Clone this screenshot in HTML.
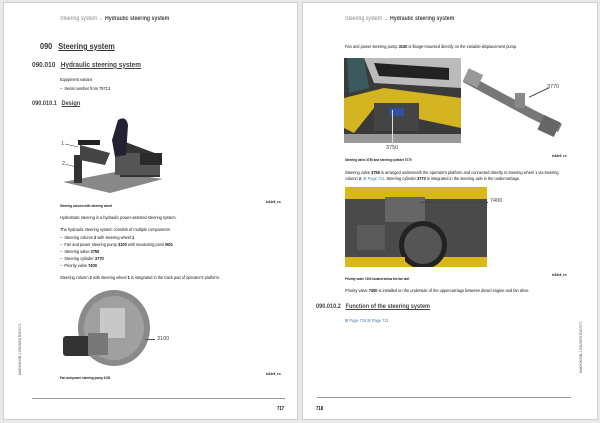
<!DOCTYPE html>
<html><head><meta charset="utf-8"><style>
*{margin:0;padding:0;box-sizing:border-box}
body{width:600px;height:423px;background:#e9e9e9;position:relative;overflow:hidden;font-family:"Liberation Sans Narrow","Liberation Sans",sans-serif;color:#111}
.pg{position:absolute;background:#fff;top:2px;height:418px;border:1px solid #cfcfcf}
.t{position:absolute;white-space:nowrap;font-size:4.6px;line-height:5px;transform:scaleX(0.86);transform-origin:0 0}
.hd{font-size:6px;color:#888}
.hd b{color:#444;font-weight:bold}
.h1{font-size:8.5px;color:#333;font-weight:bold}
.h2{font-size:7.5px;color:#444;font-weight:bold}
.h3{font-size:6.5px;color:#444;font-weight:bold}
u{text-decoration:underline}
.line{position:absolute;height:1px;background:#999}
.lbl{position:absolute;font-size:5.5px;color:#444}
.vt{position:absolute;font-size:3.5px;color:#555;writing-mode:vertical-rl;transform:rotate(180deg)}
.sm{font-size:3.5px !important;font-weight:bold}
</style></head><body>
<div class="pg" style="left:3px;width:295px"></div>
<div class="pg" style="left:302px;width:296px"></div>

<!-- left page -->
<div class="t hd" style="left:60px;top:17px">Steering system → <b>Hydraulic steering system</b></div>
<div class="t h1" style="left:40px;top:44px">090&nbsp;&nbsp;&nbsp;<u>Steering system</u></div>
<div class="t h2" style="left:32px;top:62px">090.010&nbsp;&nbsp;&nbsp;<u>Hydraulic steering system</u></div>
<div class="t" style="left:60px;top:77px">Equipment variant</div>
<div class="t" style="left:60px;top:86px">–&nbsp; Serial number from 79713</div>
<div class="t h3" style="left:32px;top:101px">090.010.1&nbsp;&nbsp;&nbsp;<u>Design</u></div>
<svg style="position:absolute;left:60px;top:115px" width="110" height="82">
<polygon points="3,67 55,57 103,64 50,78" fill="#888"/>
<polygon points="60,25 100,40 100,62 60,62" fill="#333"/>
<rect x="55" y="38" width="45" height="22" fill="#555"/>
<path d="M58,5 Q66,0 68,10 L66,40 L55,42 L52,25Z" fill="#223"/>
<rect x="18" y="25" width="22" height="5" fill="#222"/>
<rect x="14" y="40" width="8" height="28" fill="#333"/>
<path d="M20,30 L50,38 L45,50 L20,45Z" fill="#444"/>
<rect x="80" y="38" width="22" height="12" fill="#2a2a2a"/>
<line x1="5" y1="29" x2="18" y2="32" stroke="#333" stroke-width=".5"/>
<line x1="5" y1="49" x2="16" y2="52" stroke="#333" stroke-width=".5"/>
</svg>
<div class="lbl" style="left:61px;top:141px">1</div>
<div class="lbl" style="left:62px;top:161px">2</div>
<div class="t sm" style="left:60px;top:204px">Steering column with steering wheel</div>
<div class="t sm" style="left:266px;top:200px">tx34e6_en</div>
<div class="t" style="left:60px;top:215px">Hydrostatic steering is a hydraulic power-assisted steering system.</div>
<div class="t" style="left:60px;top:227px">The hydraulic steering system consists of multiple components:</div>
<div class="t" style="left:60px;top:235px">–&nbsp; Steering column <b>2</b> with steering wheel <b>1</b></div>
<div class="t" style="left:60px;top:242px">–&nbsp; Fan and power steering pump <b>3100</b> with measuring point <b>M01</b></div>
<div class="t" style="left:60px;top:249px">–&nbsp; Steering valve <b>3750</b></div>
<div class="t" style="left:60px;top:256px">–&nbsp; Steering cylinder <b>3770</b></div>
<div class="t" style="left:60px;top:263px">–&nbsp; Priority valve <b>7400</b></div>
<div class="t" style="left:60px;top:275px">Steering column <b>2</b> with steering wheel <b>1</b> is integrated in the track pad of operator's platform.</div>
<svg style="position:absolute;left:60px;top:288px" width="100" height="82">
<ellipse cx="54" cy="40" rx="36" ry="38" fill="#8a8a8a"/>
<ellipse cx="54" cy="40" rx="30" ry="32" fill="#a0a0a0"/>
<rect x="40" y="20" width="25" height="30" fill="#c8c8c8"/>
<rect x="3" y="48" width="28" height="20" rx="3" fill="#333"/>
<rect x="28" y="45" width="20" height="22" fill="#777"/>
</svg>
<div class="line" style="left:145px;top:339px;width:10px;background:#555"></div>
<div class="lbl" style="left:157px;top:336px">3100</div>
<div class="t sm" style="left:60px;top:376px">Fan and power steering pump 3100</div>
<div class="t sm" style="left:266px;top:372px">tx34e6_en</div>
<div class="vt" style="left:18px;top:305px;height:70px">MAEKW/GB-1 EN/WESTDOS/71</div>
<div class="line" style="left:32px;top:398px;width:253px"></div>
<div class="t" style="left:277px;top:407px;font-size:5px;font-weight:bold">717</div>

<!-- right page -->
<div class="t hd" style="left:345px;top:17px">Steering system → <b>Hydraulic steering system</b></div>
<div class="t" style="left:345px;top:44px">Fan and power steering pump <b>3100</b> is flange-mounted directly on the variable-displacement pump.</div>
<svg style="position:absolute;left:344px;top:58px" width="117" height="85">
<rect width="117" height="85" fill="#3a3a3a"/>
<polygon points="20,0 117,0 117,30 30,25" fill="#bbb"/>
<polygon points="30,5 105,10 105,22 35,18" fill="#222"/>
<polygon points="3,0 20,0 25,30 5,35" fill="#3a5a60"/>
<path d="M0,40 L40,30 L117,40 L117,70 L70,60 L30,50 L10,75 L0,70Z" fill="#d4b420"/>
<rect x="30" y="45" width="45" height="28" fill="#444"/>
<rect x="45" y="50" width="15" height="8" fill="#3050a0"/>
<rect x="0" y="76" width="117" height="9" fill="#999"/>
</svg>
<svg style="position:absolute;left:460px;top:68px" width="105" height="72">
<path d="M5,10 L70,45 L100,60" stroke="#777" stroke-width="9" fill="none"/>
<rect x="5" y="3" width="16" height="14" fill="#999" transform="rotate(25 13 10)"/>
<rect x="80" y="50" width="18" height="16" fill="#666" transform="rotate(25 89 58)"/>
<rect x="55" y="25" width="10" height="15" fill="#888"/>
</svg>
<div class="line" style="left:528px;top:92px;width:22px;transform:rotate(-25deg);background:#444"></div>
<div class="lbl" style="left:547px;top:84px">3770</div>
<div class="line" style="left:392px;top:110px;width:1px;height:35px;background:#ddd"></div>
<div class="lbl" style="left:386px;top:145px">3750</div>
<div class="t sm" style="left:345px;top:158px">Steering valve 3750 and steering cylinder 3770</div>
<div class="t sm" style="left:552px;top:154px">tx34e6_en</div>
<div class="t" style="left:345px;top:170px">Steering valve <b>3750</b> is arranged underneath the operator's platform and connected directly to steering wheel 1 via steering</div>
<div class="t" style="left:345px;top:176px">column <b>2</b>, <span style="color:#4a7cb0">⊞ Page 711</span>. Steering cylinder <b>3770</b> is integrated in the steering axle in the undercarriage.</div>
<svg style="position:absolute;left:345px;top:187px" width="142" height="80">
<rect width="142" height="80" fill="#d8b818"/>
<rect x="0" y="12" width="142" height="58" fill="#4a4a4a"/>
<rect x="40" y="10" width="40" height="25" fill="#666"/>
<rect x="12" y="38" width="28" height="25" fill="#5a5a5a"/>
<circle cx="78" cy="58" r="24" fill="#222"/>
<circle cx="78" cy="58" r="19" fill="#555"/>
<rect x="0" y="70" width="60" height="10" fill="#d8b818"/>
<rect x="100" y="72" width="42" height="8" fill="#d8b818"/>
</svg>
<div class="line" style="left:420px;top:202px;width:68px;background:#444"></div>
<div class="lbl" style="left:490px;top:198px">7400</div>
<div class="t sm" style="left:345px;top:277px">Priority valve 7400 located below the fan unit</div>
<div class="t sm" style="left:552px;top:273px">tx34e6_en</div>
<div class="t" style="left:345px;top:288px">Priority valve <b>7400</b> is installed on the underside of the uppercarriage between diesel engine and fan drive.</div>
<div class="t h3" style="left:316px;top:304px">090.010.2&nbsp;&nbsp;&nbsp;<u>Function of the steering system</u></div>
<div class="t" style="left:345px;top:318px;color:#4a7cb0">⊞ Page 718 ⊞ Page 721</div>
<div class="vt" style="left:579px;top:315px;height:58px">MAEKW/GB-1 EN/WESTDOS/71</div>
<div class="line" style="left:317px;top:397px;width:254px"></div>
<div class="t" style="left:316px;top:407px;font-size:5px;font-weight:bold">718</div>
</body></html>
